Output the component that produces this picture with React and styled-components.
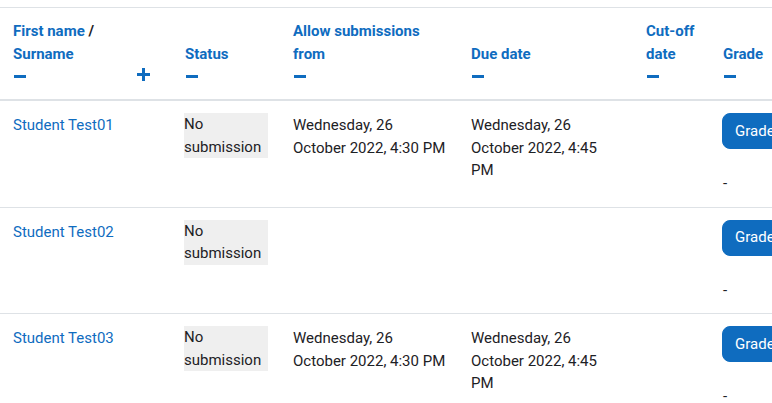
import React from 'react';
import styled, { createGlobalStyle } from 'styled-components';

const GlobalStyle = createGlobalStyle`
  html, body {
    margin: 0;
    padding: 0;
    background: #fff;
    overflow: hidden;
  }
  body {
    font-family: Roboto, "Noto Sans", sans-serif;
    font-size: 15px;
    line-height: 1.5;
    color: #1d2125;
  }
`;

const Page = styled.div`
  padding-top: 7px;
  width: 772px;
  overflow: hidden;
`;

const Table = styled.table`
  table-layout: fixed;
  border-collapse: collapse;
  width: 830px;
`;

const Th = styled.th`
  position: relative;
  text-align: left;
  vertical-align: bottom;
  font-weight: 700;
  padding: 12px ${(p) => (p.$roomRight ? '40px' : '12px')} 12px 13px;
  border-top: 1px solid #dee2e6;
  border-bottom: 2px solid #dee2e6;
`;

const Td = styled.td`
  vertical-align: top;
  padding: 13px 12px 12px 13px;
  border-bottom: 1px solid #dee2e6;
`;

const HeadLink = styled.a`
  color: #0f6cbf;
  text-decoration: none;
`;

const Slash = styled.span`
  color: #1d2125;
`;

const IconLine = styled.div`
  display: flex;
  align-items: center;
  height: 22px;
`;

const Minus = styled.span`
  display: block;
  width: 12px;
  height: 3px;
  background: #0f6cbf;
  margin-left: 1px;
`;

const Plus = styled.span`
  position: absolute;
  right: 22px;
  bottom: 18px;
  width: 13px;
  height: 13px;
  &::before,
  &::after {
    content: '';
    position: absolute;
    background: #0f6cbf;
  }
  &::before {
    left: 0;
    right: 0;
    top: 5px;
    height: 3px;
  }
  &::after {
    top: 0;
    bottom: 0;
    left: 5px;
    width: 3px;
  }
`;

const NameLink = styled.a`
  color: #0f6cbf;
  text-decoration: none;
`;

const Status = styled.div`
  background: #efefef;
  margin: -1px 0 0 -1px;
`;

const GradeButton = styled.button`
  display: block;
  font: inherit;
  color: #fff;
  background: #0f6cbf;
  border: 1px solid #0f6cbf;
  border-radius: 8px;
  padding: 5px 12px;
  margin: -1px 0 0 -1px;
  height: 36px;
  white-space: nowrap;
`;

const Dash = styled.div`
  margin-top: 23px;
`;

const rows = [
  {
    name: 'Student Test01',
    from: 'Wednesday, 26 October 2022, 4:30 PM',
    due: 'Wednesday, 26 October 2022, 4:45 PM',
  },
  { name: 'Student Test02', from: '', due: '' },
  {
    name: 'Student Test03',
    from: 'Wednesday, 26 October 2022, 4:30 PM',
    due: 'Wednesday, 26 October 2022, 4:45 PM',
  },
];

const HideIcon = () => (
  <IconLine>
    <Minus />
  </IconLine>
);

export default function App() {
  return (
    <>
      <GlobalStyle />
      <Page>
        <Table>
          <colgroup>
            <col style={{ width: 172 }} />
            <col style={{ width: 108 }} />
            <col style={{ width: 178 }} />
            <col style={{ width: 175 }} />
            <col style={{ width: 77 }} />
            <col style={{ width: 120 }} />
          </colgroup>
          <thead>
            <tr>
              <Th $roomRight>
                <HeadLink href="#">First name</HeadLink> <Slash>/</Slash>{' '}
                <HeadLink href="#">Surname</HeadLink>
                <HideIcon />
                <Plus />
              </Th>
              <Th>
                <HeadLink href="#">Status</HeadLink>
                <HideIcon />
              </Th>
              <Th>
                <HeadLink href="#">Allow submissions from</HeadLink>
                <HideIcon />
              </Th>
              <Th>
                <HeadLink href="#">Due date</HeadLink>
                <HideIcon />
              </Th>
              <Th>
                <HeadLink href="#">Cut-off date</HeadLink>
                <HideIcon />
              </Th>
              <Th>
                <HeadLink href="#">Grade</HeadLink>
                <HideIcon />
              </Th>
            </tr>
          </thead>
          <tbody>
            {rows.map((r) => (
              <tr key={r.name}>
                <Td>
                  <NameLink href="#">{r.name}</NameLink>
                </Td>
                <Td>
                  <Status>No submission</Status>
                </Td>
                <Td>{r.from}</Td>
                <Td>{r.due}</Td>
                <Td />
                <Td>
                  <GradeButton>Grade</GradeButton>
                  <Dash>-</Dash>
                </Td>
              </tr>
            ))}
          </tbody>
        </Table>
      </Page>
    </>
  );
}
